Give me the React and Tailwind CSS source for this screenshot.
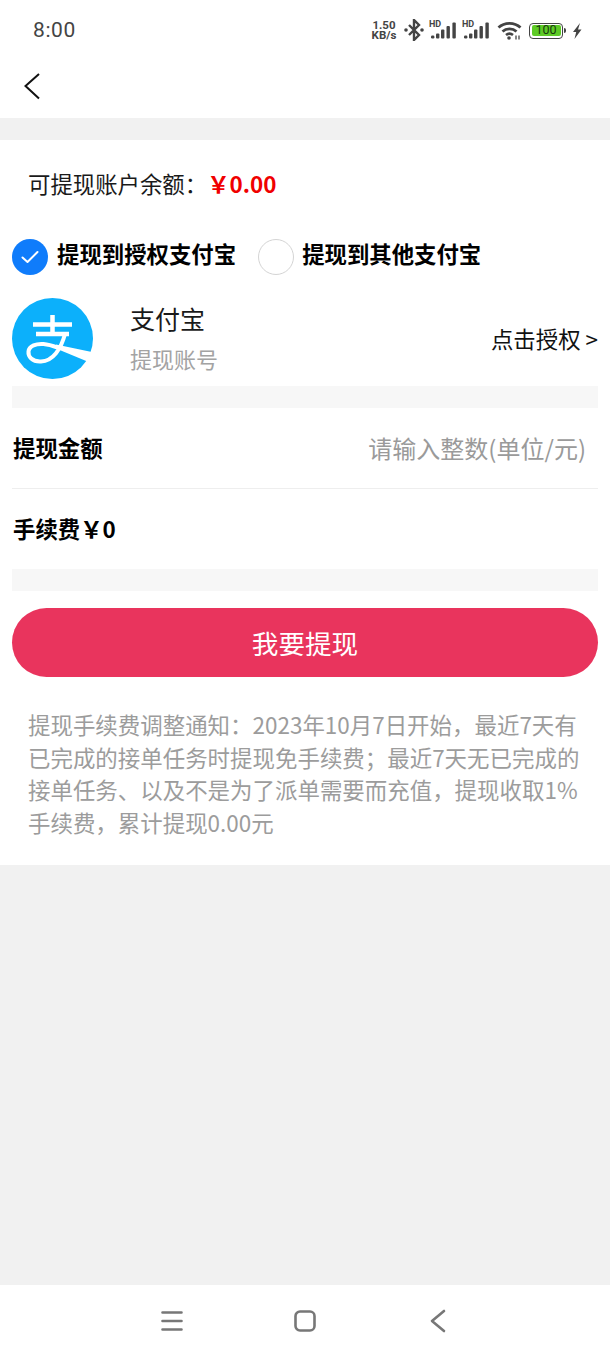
const font = { fontFamily: '"Noto Sans CJK SC", sans-serif' };

function Signal() {
  return (
    <svg width="27" height="20" viewBox="0 0 27 20">
      <text x="0" y="6.500" fontSize="9" fontWeight="700" fill="#444" fontFamily="Roboto, sans-serif">HD</text>
      <rect x="2" y="15.500" width="3.400" height="3" rx="1.200" fill="#444" />
      <rect x="7" y="13.500" width="3.400" height="5" rx="1" fill="#444" />
      <rect x="12" y="9.500" width="3.400" height="9" rx="1" fill="#444" />
      <rect x="17.500" y="6" width="3.400" height="12.500" rx="1" fill="#444" />
      <rect x="23.400" y="2.500" width="3.400" height="16" rx="1" fill="#444" />
    </svg>
  );
}

function StatusBar() {
  return (
    <div className="h-[58px] bg-white flex items-center justify-between pl-[33px] pr-[28px] pt-[3px]">
      <span className="text-[21px] text-[#444] tracking-[0.6px]" style={{ fontFamily: 'Roboto, sans-serif' }}>8:00</span>
      <div className="flex items-center">
        <div className="flex flex-col items-center text-[11.5px] leading-[10px] font-bold text-[#444] w-[26px] mr-[7px] mb-[2px]" style={{ fontFamily: 'Roboto, sans-serif' }}>
          <span>1.50</span>
          <span>KB/s</span>
        </div>
        <svg width="20" height="22" viewBox="0 0 20 22" className="mr-[5px] mb-[2px]" fill="none" stroke="#444" strokeWidth="2.400">
          <path d="M5 6l10 10-5 5V1l5 5L5 16" />
          <circle cx="2" cy="11" r="1.800" fill="#444" stroke="none" />
          <circle cx="18" cy="11" r="1.800" fill="#444" stroke="none" />
        </svg>
        <div className="mr-[6px] mb-[2px] flex"><Signal /></div>
        <div className="mr-[8px] mb-[2px] flex"><Signal /></div>
        <svg width="25" height="20" viewBox="0 0 25 20" className="mr-[7px] mb-[2px]" fill="none" stroke="#444" strokeWidth="2.800">
          <path d="M1.500 7.500c6-5.600 16-5.600 22 0" />
          <path d="M5.500 11.500c3.800-3.400 10.200-3.400 14 0" />
          <path d="M9 15c2-1.500 5-1.500 7 0" />
          <circle cx="12" cy="18" r="1.800" fill="#444" stroke="none" />
          <path d="M19 15.500v4M22 15.500v4" strokeWidth="1.300" />
        </svg>
        <div className="w-[34px] h-[16px] rounded-[4px] border border-[#444] p-[1.5px] flex">
          <div className="flex-1 rounded-[2px] bg-[#5ecb26] flex items-center justify-center text-[12.5px] leading-none text-[#173a0c]" style={{ fontFamily: 'Roboto, sans-serif' }}>100</div>
        </div>
        <div className="w-[2px] h-[5px] bg-[#444] ml-[1px] mr-[6px] rounded-r-sm" />
        <svg width="10" height="16" viewBox="0 0 10 16" fill="#444">
          <path d="M8 0L1 9h3.200L2.500 16 9.500 6.500H6L8 0z" />
        </svg>
      </div>
    </div>
  );
}

function Spacer() {
  return <div className="h-[22px] bg-[#f7f7f7]" />;
}

function Check({ on }) {
  if (on) {
    return (
      <div className="w-9 h-9 rounded-full bg-[#0f7cfb] flex items-center justify-center">
        <svg width="18" height="14" viewBox="0 0 18 14" fill="none" stroke="#fff" strokeWidth="2" strokeLinecap="round" strokeLinejoin="round">
          <path d="M1.500 7.500l5 4.500 10-10" />
        </svg>
      </div>
    );
  }
  return <div className="w-9 h-9 rounded-full border-[1.5px] border-[#d4d4d4] bg-white" />;
}

function AlipayLogo() {
  return (
    <svg width="81" height="81" viewBox="0 0 81 81" className="shrink-0">
      <circle cx="40.500" cy="40.500" r="40.500" fill="#0cb0fb" />
      <path d="M21 26.500h39M24 36h33M40.500 17v19" fill="none" stroke="#fff" strokeWidth="4.500" />
      <path d="M53 36c-4 15-12 27-24 27.500-9 .5-13-5-12.500-10 .5-6 8-8 15-7.500 6 .5 11 2.500 15 4" fill="none" stroke="#fff" strokeWidth="4" />
      <path d="M44 46.500L82 54.500V66L73 62.500 44 50.500z" fill="#fff" />
    </svg>
  );
}

export default function App() {
  return (
    <div className="w-[610px] h-[1356px] bg-[#f1f1f1] flex flex-col" style={font}>
      <StatusBar />
      <div className="h-[60px] bg-white flex items-center pl-[22px] pb-[5px]">
        <svg width="20" height="28" viewBox="0 0 20 28" fill="none" stroke="#111" strokeWidth="2">
          <path d="M17 2L3.500 14 17 26.500" />
        </svg>
      </div>
      <div className="h-[22px]" />
      <div className="bg-white h-[725px] flex flex-col">
        <div className="flex items-center h-[34px] mt-[27px] pl-[28px] text-[22.4px] text-[#1a1a1a]">
          <span>可提现账户余额：</span>
          <span className="text-[#f00000] font-bold">￥0.00</span>
        </div>
        <div className="flex items-center h-9 mt-[38px] pl-3 text-[22.4px] font-bold text-black">
          <Check on />
          <span className="ml-[9px] mb-[6px]">提现到授权支付宝</span>
          <div className="ml-[22px]"><Check /></div>
          <span className="ml-2 mb-[6px]">提现到其他支付宝</span>
        </div>
        <div className="px-3">
          <div className="flex items-center h-[81px] mt-[23px]">
            <AlipayLogo />
            <div className="ml-[37px] flex-1 flex flex-col -mt-[2px]">
              <span className="text-[25px] leading-[36px] text-[#1a1a1a] -mt-[2px]">支付宝</span>
              <span className="text-[22px] leading-[32px] text-[#a3a3a3] mt-[6px]">提现账号</span>
            </div>
            <span className="text-[22.4px] text-[#111]">点击授权 &gt;</span>
          </div>
          <div className="h-[22px] mt-[7px] bg-[#f7f7f7]" />
          <div className="flex items-center justify-between h-[81px] border-b border-[#eeeeee]">
            <span className="text-[22.4px] font-bold text-black pl-px">提现金额</span>
            <span className="text-[24px] text-[#9a9a9a] pr-3">请输入整数(单位/元)</span>
          </div>
          <div className="flex items-center h-[80px] text-[22.4px] font-bold text-black pl-px">
            <span>手续费</span>
            <span>￥0</span>
          </div>
          <Spacer />
          <button className="w-full h-[69px] mt-[17px] rounded-full bg-[#e9345d] text-white text-[26.6px] flex items-center justify-center">我要提现</button>
        </div>
        <p className="mt-[31px] px-[28px] text-[22.46px] leading-[32.5px] text-[#9c9c9c]">
          提现手续费调整通知：2023年10月7日开始，最近7天有已完成的接单任务时提现免手续费；最近7天无已完成的接单任务、以及不是为了派单需要而充值，提现收取1%手续费，累计提现0.00元
        </p>
      </div>
      <div className="flex-1" />
      <div className="h-[71px] bg-white flex items-center pl-[161px]">
        <svg width="22" height="22" viewBox="0 0 22 22" stroke="#777" strokeWidth="2.600" strokeLinecap="round">
          <path d="M1.500 2.500h19M1.500 11h19M1.500 19.500h19" />
        </svg>
        <svg width="22" height="22" viewBox="0 0 22 22" fill="none" stroke="#777" strokeWidth="2.600" className="ml-[111px]">
          <rect x="1.500" y="1.500" width="19" height="19" rx="4.500" />
        </svg>
        <svg width="16" height="24" viewBox="0 0 16 24" fill="none" stroke="#777" strokeWidth="2.600" strokeLinecap="round" strokeLinejoin="round" className="ml-[114px]">
          <path d="M14 2L2 12l12 10" />
        </svg>
      </div>
    </div>
  );
}
